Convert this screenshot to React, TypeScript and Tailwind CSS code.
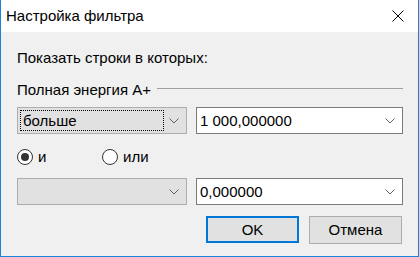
import React from "react";

const font = { fontFamily: '"Liberation Sans", Arial, sans-serif' };

function Chevron({ color = "#606060" }: { color?: string }) {
  return (
    <svg width="10" height="6" viewBox="0 0 10 6" className="shrink-0">
      <path d="M0.5 0.5 L5 5 L9.5 0.5" fill="none" stroke={color} strokeWidth="1" />
    </svg>
  );
}

function Radio({ checked, label }: { checked: boolean; label: string }) {
  return (
    <div className="flex items-center gap-[5px]">
      <div className="w-4 h-4 rounded-full border border-[#333333] bg-white flex items-center justify-center">
        {checked && <div className="w-2 h-2 rounded-full bg-[#333333]"></div>}
      </div>
      <span className="text-[15px] leading-5 text-black">{label}</span>
    </div>
  );
}

function ReadonlyCombo({ text, focused }: { text?: string; focused?: boolean }) {
  return (
    <div className="w-[170px] h-[27px] border border-[#adadad] bg-[#e1e1e1] flex items-center pr-[7px]">
      <div className={`ml-[2px] h-[21px] w-[144px] flex items-center pl-[2px] ${focused ? "border border-dotted border-black" : ""}`}>
        <span className="text-[15px] leading-5 text-black">{text}</span>
      </div>
      <div className="flex-1"></div>
      <Chevron />
    </div>
  );
}

function EditCombo({ value }: { value: string }) {
  return (
    <div className="w-[207px] h-[27px] border border-[#7a7a7a] bg-white flex items-center pl-[3px] pr-[7px]">
      <span className="flex-1 text-[15px] leading-5 text-black">{value}</span>
      <Chevron />
    </div>
  );
}

export default function App() {
  return (
    <div style={font} className="w-[419px] h-[257px] bg-[#f0f0f0] border-l border-r border-b border-[#1883d7] flex flex-col">
      <div className="h-8 bg-white flex items-center justify-between pl-[5px] pr-[14px] shrink-0">
        <span className="text-[15px] leading-5 text-black -mt-[1px]">Настройка фильтра</span>
        <svg width="12" height="12" viewBox="0 0 12 12">
          <path d="M0.5 0.5 L11.5 11.5 M11.5 0.5 L0.5 11.5" stroke="#000" strokeWidth="1" />
        </svg>
      </div>
      <div className="flex flex-col pl-4 pr-[15px]">
        <div className="mt-4 text-[15px] leading-5 text-black">Показать строки в которых:</div>
        <div className="mt-3 flex items-start gap-[6px]">
          <span className="text-[15px] leading-5 text-black whitespace-nowrap">Полная энергия А+</span>
          <div className="flex-1 h-px bg-[#a0a0a0] mt-[8px]"></div>
        </div>
        <div className="mt-[7px] flex gap-[9px]">
          <ReadonlyCombo text="больше" focused />
          <EditCombo value="1 000,000000" />
        </div>
        <div className="mt-[13px] flex items-center">
          <div className="w-[85px]">
            <Radio checked label="и" />
          </div>
          <Radio checked={false} label="или" />
        </div>
        <div className="mt-[11px] flex gap-[9px]">
          <ReadonlyCombo />
          <EditCombo value="0,000000" />
        </div>
        <div className="mt-[11px] flex justify-end gap-[10px] pr-[1px]">
          <button className="w-[93px] h-[27px] border-2 border-[#0078d7] bg-[#e1e1e1] text-[15px] leading-5 text-black">OK</button>
          <button className="w-[93px] h-[28px] border border-[#adadad] bg-[#e1e1e1] text-[15px] leading-5 text-black">Отмена</button>
        </div>
      </div>
    </div>
  );
}
